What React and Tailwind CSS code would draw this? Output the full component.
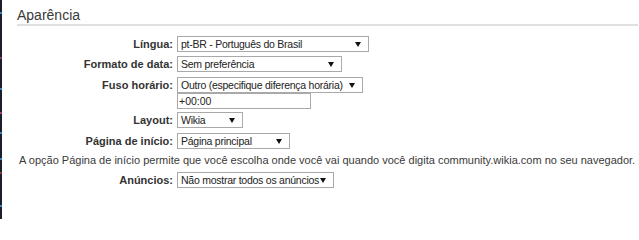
import React from "react";

function Arrow() {
  return (
    <svg className="absolute right-[7px] top-[5px]" width="6" height="5" viewBox="0 0 6 5">
      <polygon points="0,0 6,0 3,5" fill="#111" />
    </svg>
  );
}

function Select({ value, width }) {
  return (
    <div
      className="relative flex h-[16px] items-center border border-[#a9a9a9] bg-white pl-[3px] text-[10.5px] leading-none tracking-[-0.25px] text-[#222]"
      style={{ width }}
    >
      <span className="whitespace-nowrap">{value}</span>
      <Arrow />
    </div>
  );
}

function Row({ label, children, className = "" }) {
  return (
    <div className={"flex items-start " + className}>
      <div className="w-[175px] shrink-0 pr-[4px] text-right text-[11px] font-bold leading-[16px] text-[#333]">
        {label}
      </div>
      <div className="flex flex-col">{children}</div>
    </div>
  );
}

export default function App() {
  return (
    <div
      className="flex h-[219px] w-[639px] overflow-hidden bg-white"
      style={{ fontFamily: '"Liberation Sans", Arial, sans-serif' }}
    >
      <div className="relative w-[2px] shrink-0 bg-[#1b1f2a]">
        <div className="absolute left-0 top-[12px] h-[2px] w-[2px] bg-[#3b82c4]" />
        <div className="absolute left-0 top-[57px] h-[2px] w-[2px] bg-[#8a3a6a]" />
        <div className="absolute left-0 top-[88px] h-[2px] w-[2px] bg-[#3b82c4]" />
        <div className="absolute left-0 top-[112px] h-[2px] w-[2px] bg-[#a0407a]" />
        <div className="absolute left-0 top-[132px] h-[2px] w-[2px] bg-[#3b82c4]" />
        <div className="absolute left-0 top-[158px] h-[2px] w-[2px] bg-[#3b82c4]" />
        <div className="absolute left-0 top-[172px] h-[2px] w-[2px] bg-[#8a3a3a]" />
        <div className="absolute left-0 top-[205px] h-[2px] w-[2px] bg-[#3b82c4]" />
      </div>
      <div className="flex flex-1 flex-col">
        <div className="ml-[15px] mr-[1px] mt-[7px] border-b-2 border-[#e0e0e0] pb-[1px] text-[14px] leading-[16px] text-[#3a3a3a]">
          Aparência
        </div>
        <div className="mt-[10px] flex flex-col">
          <Row label="Língua:">
            <Select value="pt-BR - Português do Brasil" width="192px" />
          </Row>
          <Row label="Formato de data:" className="mt-[4px]">
            <Select value="Sem preferência" width="165px" />
          </Row>
          <Row label="Fuso horário:" className="mt-[5px]">
            <Select value="Outro (especifique diferença horária)" width="186px" />
            <div className="flex h-[16px] w-[134px] items-center border border-[#a9a9a9] bg-white pl-[1px] text-[10.5px] leading-none text-[#222]">
              +00:00
            </div>
          </Row>
          <Row label="Layout:" className="mt-[3px]">
            <Select value="Wikia" width="66px" />
          </Row>
          <Row label="Página de início:" className="mt-[5px]">
            <Select value="Página principal" width="113px" />
          </Row>
          <div className="mt-[3px] whitespace-nowrap pl-[17px] text-[11px] leading-[16px] text-[#3a3a3a]">
            A opção Página de início permite que você escolha onde você vai quando você digita community.wikia.com no seu navegador.
          </div>
          <Row label="Anúncios:" className="mt-[4px]">
            <Select value="Não mostrar todos os anúncios" width="157px" />
          </Row>
        </div>
      </div>
    </div>
  );
}
